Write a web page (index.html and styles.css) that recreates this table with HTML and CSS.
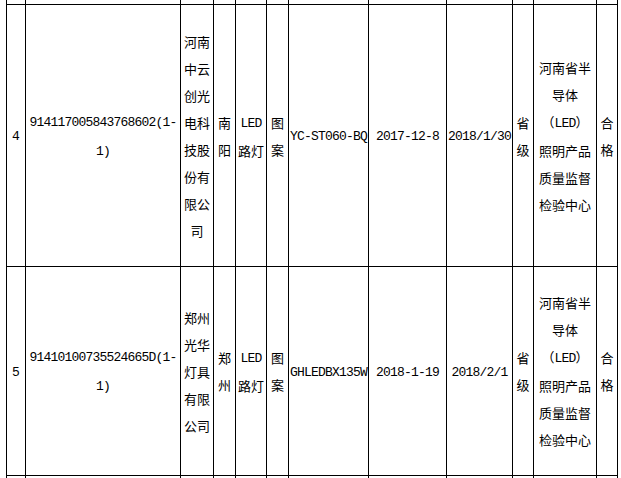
FILE: index.html
```html
<!DOCTYPE html>
<html lang="zh-CN">
<head>
<meta charset="utf-8">
<title>检验结果</title>
<link rel="stylesheet" href="styles.css">
</head>
<body>
<table class="grid">
  <colgroup>
    <col class="c1"><col class="c2"><col class="c3"><col class="c4"><col class="c5"><col class="c6">
    <col class="c7"><col class="c8"><col class="c9"><col class="c10"><col class="c11"><col class="c12">
  </colgroup>
  <tr class="cut-top"><td></td><td></td><td></td><td></td><td></td><td></td><td></td><td></td><td></td><td></td><td></td><td></td></tr>
  <tr class="row-a">
    <td class="no"><span class="lat">4</span></td>
    <td><span class="lat">914117005843768602(1-<br>1)</span></td>
    <td>河南<br>中云<br>创光<br>电科<br>技股<br>份有<br>限公<br>司</td>
    <td>南<br>阳</td>
    <td><span class="lat">LED</span><br>路灯</td>
    <td>图<br>案</td>
    <td><span class="lat">YC-ST060-BQ</span></td>
    <td><span class="lat">2017-12-8</span></td>
    <td><span class="lat">2018/1/30</span></td>
    <td>省<br>级</td>
    <td>河南省半<br>导体<br>（<span class="lat">LED</span>）<br>照明产品<br>质量监督<br>检验中心</td>
    <td>合<br>格</td>
  </tr>
  <tr class="row-b">
    <td class="no"><span class="lat">5</span></td>
    <td><span class="lat">91410100735524665D(1-<br>1)</span></td>
    <td>郑州<br>光华<br>灯具<br>有限<br>公司</td>
    <td>郑<br>州</td>
    <td><span class="lat">LED</span><br>路灯</td>
    <td>图<br>案</td>
    <td><span class="lat">GHLEDBX135W</span></td>
    <td><span class="lat">2018-1-19</span></td>
    <td><span class="lat">2018/2/1</span></td>
    <td>省<br>级</td>
    <td>河南省半<br>导体<br>（<span class="lat">LED</span>）<br>照明产品<br>质量监督<br>检验中心</td>
    <td>合<br>格</td>
  </tr>
  <tr class="cut-bottom"><td></td><td></td><td></td><td></td><td></td><td></td><td></td><td></td><td></td><td></td><td></td><td></td></tr>
</table>
</body>
</html>
```

FILE: styles.css
```css
html, body {
  margin: 0;
  padding: 0;
  background: #fff;
  overflow: hidden;
}

.grid {
  border-collapse: collapse;
  table-layout: fixed;
  width: 612px;
  margin-left: 6px;
  font-family: "Noto Sans CJK SC", sans-serif;
  font-size: 13px;
  line-height: 27px;
  color: #000;
}

.c1 { width: 19px; }
.c2 { width: 155px; }
.c3 { width: 33px; }
.c4 { width: 22px; }
.c5 { width: 31px; }
.c6 { width: 22px; }
.c7 { width: 80px; }
.c8 { width: 78px; }
.c9 { width: 66px; }
.c10 { width: 21px; }
.c11 { width: 63px; }
.c12 { width: 21px; }

.grid td {
  border: 1px solid #000;
  padding: 0 1px;
  text-align: center;
  vertical-align: middle;
  white-space: nowrap;
}

.grid .cut-top td {
  height: 4px;
  padding: 0;
  border-top: none;
}

.grid .row-a td { height: 261px; }
.grid .row-b td { height: 208px; }

.grid .cut-bottom td {
  height: 20px;
  padding: 0;
  border-bottom: none;
}

.lat {
  font-family: "Liberation Mono", monospace;
  letter-spacing: -0.8px;
}

.no .lat {
  letter-spacing: 0;
}
```
